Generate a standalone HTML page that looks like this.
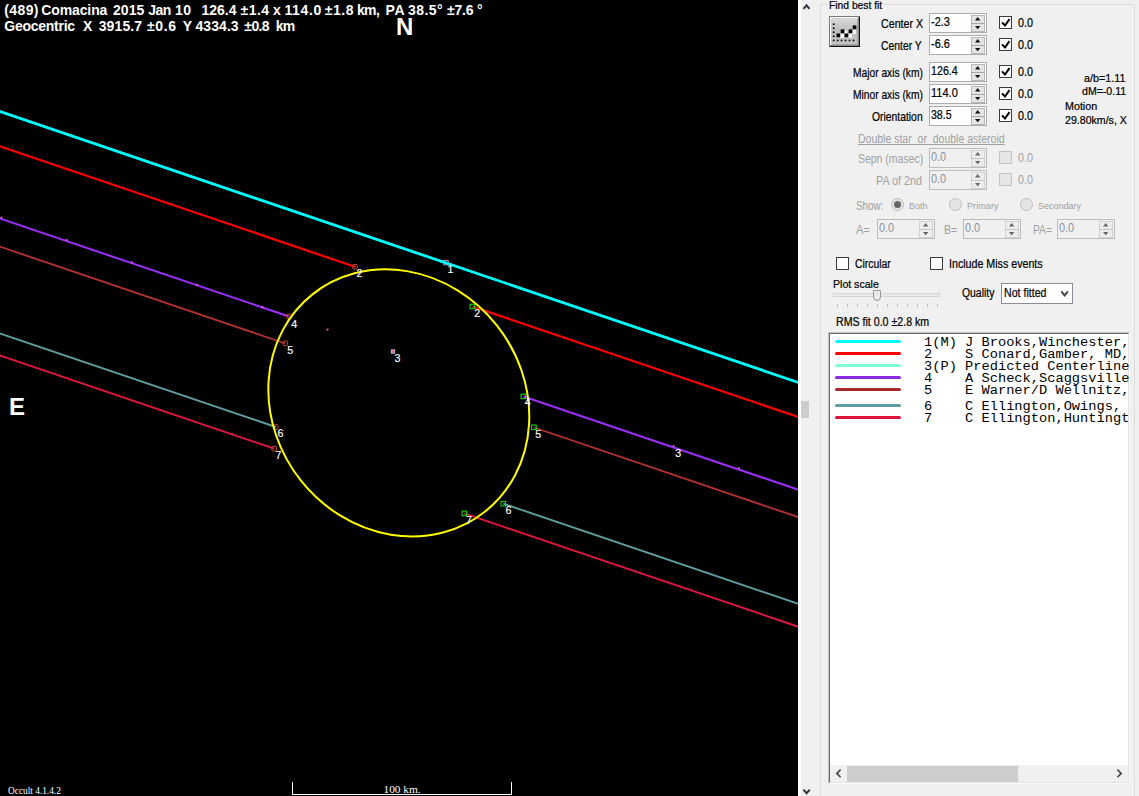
<!DOCTYPE html>
<html><head><meta charset="utf-8"><title>Occult - asteroid occultation plot</title>
<style>
html,body{margin:0;padding:0;}
body{width:1139px;height:796px;overflow:hidden;background:#f0f0f0;position:relative;font-family:"Liberation Sans",sans-serif;font-size:11px;color:#000;}
#plot{position:absolute;left:0;top:0;width:798px;height:796px;background:#000;overflow:hidden;}
#plot svg{position:absolute;left:0;top:0;}
.t{position:absolute;white-space:pre;line-height:1;}
.ttl{color:#fff;font-weight:bold;font-size:14px;}
.big{color:#fff;font-weight:bold;font-size:24px;}
.ser{color:#fff;font-family:"Liberation Serif",serif;}
.num{color:#fff;font-size:10.67px;-webkit-text-stroke:0.15px #fff;}
#panel{position:absolute;left:798px;top:0;width:341px;height:796px;background:#f0f0f0;overflow:hidden;}
#panel .a{position:absolute;}

#panel .tx{white-space:pre;line-height:1;transform-origin:0 50%;}
#panel .mono{font-family:"Liberation Mono",monospace;font-size:13.7px;line-height:1;white-space:pre;width:204.5px;overflow:hidden;height:14px;}

</style></head><body>
<div id="plot">
<svg width="798" height="796" viewBox="0 0 798 796">
<rect x="443.8" y="260.4" width="4.4" height="4.4" fill="none" stroke="#c898b8" stroke-width="1"/>
<g fill="none">
<line x1="-3" y1="110.58" x2="801" y2="383.38" stroke="#00ffff" stroke-width="2.8"/>
<line x1="-3" y1="145.33" x2="355" y2="266.8" stroke="#ff0000" stroke-width="2.2"/>
<line x1="472.5" y1="306.5" x2="801" y2="417.96" stroke="#ff0000" stroke-width="2.2"/>
<line x1="-3" y1="217.42" x2="289" y2="316.5" stroke="#9a30f8" stroke-width="2.0"/>
<line x1="523.5" y1="396.5" x2="801" y2="490.66" stroke="#9a30f8" stroke-width="2.0"/>
<line x1="-3" y1="245.65" x2="285.4" y2="343.5" stroke="#b83232" stroke-width="1.8"/>
<line x1="534" y1="427.5" x2="801" y2="518.09" stroke="#b83232" stroke-width="1.8"/>
<line x1="-3" y1="332.4" x2="275.8" y2="427" stroke="#5f9ea0" stroke-width="1.9"/>
<line x1="503.3" y1="503.7" x2="801" y2="604.71" stroke="#5f9ea0" stroke-width="1.9"/>
<line x1="-3" y1="354.55" x2="274.2" y2="448.6" stroke="#e01840" stroke-width="1.9"/>
<line x1="464.3" y1="513.4" x2="801" y2="627.64" stroke="#e01840" stroke-width="1.9"/>
</g>
<rect x="352.75" y="264.55" width="4.5" height="4.5" fill="none" stroke="#c84830" stroke-width="1" rx="0.8"/>
<rect x="286.75" y="314.15" width="4.5" height="4.5" fill="none" stroke="#c84830" stroke-width="1" rx="0.8"/>
<rect x="283.15" y="341.05" width="4.5" height="4.5" fill="none" stroke="#c84830" stroke-width="1" rx="0.8"/>
<rect x="273.55" y="424.75" width="4.5" height="4.5" fill="none" stroke="#c84830" stroke-width="1" rx="0.8"/>
<rect x="271.95" y="446.35" width="4.5" height="4.5" fill="none" stroke="#c84830" stroke-width="1" rx="0.8"/>
<rect x="470.09999999999997" y="304.2" width="4.6" height="4.6" fill="none" stroke="#10e810" stroke-width="1" rx="0"/>
<rect x="521.1" y="394.09999999999997" width="4.6" height="4.6" fill="none" stroke="#10e810" stroke-width="1" rx="0"/>
<rect x="531.6" y="425.0" width="4.6" height="4.6" fill="none" stroke="#10e810" stroke-width="1" rx="0"/>
<rect x="501.0" y="501.4" width="4.6" height="4.6" fill="none" stroke="#10e810" stroke-width="1" rx="0"/>
<rect x="462.0" y="511.09999999999997" width="4.6" height="4.6" fill="none" stroke="#10e810" stroke-width="1" rx="0"/>
<ellipse cx="398.8" cy="402.9" rx="138.7" ry="125" transform="rotate(51.5 398.8 402.9)" fill="none" stroke="#ffff00" stroke-width="2"/>
<rect x="390.9" y="349.3" width="4.2" height="4.4" fill="#a8c8c8"/>
<rect x="391.9" y="350.2" width="2.4" height="2.6" fill="#ff50a8"/>
<circle cx="1.5" cy="217.6" r="1.1" fill="#e060c8"/>
<circle cx="66.7" cy="240.0" r="1.1" fill="#e060c8"/>
<circle cx="131.9" cy="262.4" r="1.1" fill="#e060c8"/>
<circle cx="197.1" cy="284.8" r="1.1" fill="#e060c8"/>
<circle cx="262.3" cy="307.2" r="1.1" fill="#e060c8"/>
<circle cx="327.5" cy="329.6" r="1.1" fill="#e060c8"/>
<circle cx="673.6" cy="445.9" r="1.0" fill="#d060d0"/>
<circle cx="738.8" cy="468.0" r="1.0" fill="#d060d0"/>
<path d="M292.5 782 V794.5 H511.5 V782" fill="none" stroke="#fff" stroke-width="1" shape-rendering="crispEdges"/>
</svg>
<div class="t ttl" style="left:4.3px;top:3.15px;letter-spacing:0.38px;">(489)</div>
<div class="t ttl" style="left:41.2px;top:3.15px;letter-spacing:-0.10px;">Comacina</div>
<div class="t ttl" style="left:113.0px;top:3.15px;letter-spacing:0.05px;">2015</div>
<div class="t ttl" style="left:148.3px;top:3.15px;letter-spacing:-0.56px;">Jan</div>
<div class="t ttl" style="left:175.1px;top:3.15px;letter-spacing:0.33px;">10</div>
<div class="t ttl" style="left:201.4px;top:3.15px;letter-spacing:0.02px;">126.4</div>
<div class="t ttl" style="left:240.6px;top:3.15px;letter-spacing:0.42px;">±1.4</div>
<div class="t ttl" style="left:272.9px;top:3.15px;letter-spacing:0.00px;">x</div>
<div class="t ttl" style="left:284.5px;top:3.15px;letter-spacing:0.60px;">114.0</div>
<div class="t ttl" style="left:324.7px;top:3.15px;letter-spacing:0.55px;">±1.8</div>
<div class="t ttl" style="left:356.9px;top:3.15px;letter-spacing:-0.60px;">km,</div>
<div class="t ttl" style="left:385.5px;top:3.15px;letter-spacing:0.60px;">PA</div>
<div class="t ttl" style="left:408.1px;top:3.15px;letter-spacing:0.39px;">38.5°</div>
<div class="t ttl" style="left:446.9px;top:3.15px;letter-spacing:-0.15px;">±7.6</div>
<div class="t ttl" style="left:477.0px;top:3.15px;letter-spacing:0.00px;">°</div>
<div class="t ttl" style="left:4.3px;top:19.15px;letter-spacing:-0.26px;">Geocentric</div>
<div class="t ttl" style="left:82.9px;top:19.15px;letter-spacing:0.00px;">X</div>
<div class="t ttl" style="left:98.7px;top:19.15px;letter-spacing:0.12px;">3915.7</div>
<div class="t ttl" style="left:147.0px;top:19.15px;letter-spacing:0.60px;">±0.6</div>
<div class="t ttl" style="left:182.8px;top:19.15px;letter-spacing:0.00px;">Y</div>
<div class="t ttl" style="left:195.5px;top:19.15px;letter-spacing:0.06px;">4334.3</div>
<div class="t ttl" style="left:244.3px;top:19.15px;letter-spacing:-0.60px;">±0.8</div>
<div class="t ttl" style="left:275.7px;top:19.15px;letter-spacing:-0.60px;">km</div>
<div class="t big" style="left:396px;top:14.6px;">N</div>
<div class="t big" style="left:9px;top:395px;">E</div>
<div class="t ser" style="left:8px;top:786.5px;font-size:9.33px;">Occult 4.1.4.2</div>
<div class="t ser" style="left:383.5px;top:783.8px;font-size:11.33px;">100 km.</div>
<div class="t num" style="left:447.5px;top:264.167845px;">1</div>
<div class="t num" style="left:356.5px;top:268.167845px;">2</div>
<div class="t num" style="left:474.2px;top:308.167845px;">2</div>
<div class="t num" style="left:291.3px;top:319.167845px;">4</div>
<div class="t num" style="left:287.3px;top:345.167845px;">5</div>
<div class="t num" style="left:277.6px;top:428.167845px;">6</div>
<div class="t num" style="left:275.6px;top:450.167845px;">7</div>
<div class="t num" style="left:394.6px;top:353.167845px;">3</div>
<div class="t num" style="left:524.8px;top:397.167845px;">4</div>
<div class="t num" style="left:535.3px;top:429.167845px;">5</div>
<div class="t num" style="left:505.5px;top:505.16784500000006px;">6</div>
<div class="t num" style="left:466.1px;top:515.167845px;">7</div>
<div class="t num" style="left:675.2px;top:448.167845px;">3</div>
</div>
<div id="panel">
<div class="a" style="left:0px;top:0px;width:3px;height:796px;background:#fff;"></div>
<div class="a" style="left:3px;top:401px;width:8px;height:17px;background:#cdcdcd;"></div>
<svg class="a" style="left:0;top:0" width="30" height="796"><path d="M5.5 8.9 L8.5 5.3 L11.5 8.9" fill="none" stroke="#3a3040" stroke-width="2"/><path d="M5.4 789.6 L8.6 793.2 L11.8 789.6" fill="none" stroke="#3a3040" stroke-width="2"/></svg>
<div class="a" style="left:22px;top:4px;width:315px;height:800px;border:1px solid #dcdcdc;box-sizing:border-box;"></div>
<div class="a" style="left:29px;top:0px;width:57px;height:10px;background:#f0f0f0;"></div>
<svg class="a" style="left:31px;top:16px" width="32" height="32" viewBox="0 0 32 32">
<defs><linearGradient id="bg" x1="0" y1="0" x2="0" y2="1"><stop offset="0" stop-color="#d8d8d8"/><stop offset="0.5" stop-color="#bcbcbc"/><stop offset="1" stop-color="#c4c4c4"/></linearGradient></defs>
<rect x="0" y="0" width="31" height="31" fill="#787878"/>
<rect x="1" y="1" width="30" height="30" fill="#101010"/>
<rect x="1" y="1" width="28.5" height="28.5" fill="#fff"/>
<rect x="2.5" y="2.5" width="27" height="27" fill="#888"/>
<rect x="2.5" y="2.5" width="26" height="26" fill="url(#bg)"/>
<g fill="#000">
<circle cx="4.7" cy="8.3" r="0.95"/><circle cx="4.7" cy="12.3" r="0.95"/><circle cx="4.7" cy="16.3" r="0.95"/><circle cx="4.7" cy="20.3" r="0.95"/><circle cx="4.7" cy="24.4" r="0.95"/>
<circle cx="8.7" cy="24.4" r="0.95"/><circle cx="12.6" cy="24.4" r="0.95"/><circle cx="16.5" cy="24.4" r="0.95"/><circle cx="20.5" cy="24.4" r="0.95"/><circle cx="24.6" cy="24.4" r="0.95"/>
</g>
<g fill="#fff"><rect x="11.3" y="18.3" width="3.6" height="3.4"/><rect x="15.3" y="14.3" width="3" height="3"/><rect x="19.3" y="18.3" width="3.6" height="3.4"/><rect x="23.3" y="14.3" width="3.4" height="3.4"/></g>
<g fill="#000"><rect x="7.5" y="17.5" width="3.7" height="3.7"/><rect x="11.7" y="13.4" width="3.7" height="3.7"/><rect x="15.6" y="17.5" width="3.7" height="3.7"/><rect x="19.7" y="13.4" width="3.7" height="3.7"/><rect x="23.7" y="9.4" width="3.7" height="3.7"/></g>
</svg>
<div class="a" style="left:131px;top:13px;width:58px;height:20px;border:1px solid #abadb3;background:#fff;box-sizing:border-box;"></div>
<div class="a" style="left:173px;top:14.5px;width:13.5px;height:17px;background:#e4e4e4;border:1px solid #b8b8b8;box-sizing:border-box;"></div>
<div class="a" style="left:173px;top:22.5px;width:13.5px;height:1px;background:#a8a8a8;"></div>
<svg class="a" style="left:173px;top:13px" width="14" height="20"><path d="M4 7.4 L6.7 4.0 L9.4 7.4 Z" fill="#111"/><path d="M4 12.9 L6.7 16.3 L9.4 12.9 Z" fill="#111"/></svg>
<div class="a" style="left:201px;top:16px;width:13px;height:13px;border:1px solid #3c3c3c;background:#fff;box-sizing:border-box;"></div>
<svg class="a" style="left:201px;top:16px" width="13" height="13"><path d="M3.0 6.4 L6.0 9.5 L10.5 3.1" fill="none" stroke="#000" stroke-width="2"/></svg>
<div class="a" style="left:131px;top:35px;width:58px;height:20px;border:1px solid #abadb3;background:#fff;box-sizing:border-box;"></div>
<div class="a" style="left:173px;top:36.5px;width:13.5px;height:17px;background:#e4e4e4;border:1px solid #b8b8b8;box-sizing:border-box;"></div>
<div class="a" style="left:173px;top:44.5px;width:13.5px;height:1px;background:#a8a8a8;"></div>
<svg class="a" style="left:173px;top:35px" width="14" height="20"><path d="M4 7.4 L6.7 4.0 L9.4 7.4 Z" fill="#111"/><path d="M4 12.9 L6.7 16.3 L9.4 12.9 Z" fill="#111"/></svg>
<div class="a" style="left:201px;top:38px;width:13px;height:13px;border:1px solid #3c3c3c;background:#fff;box-sizing:border-box;"></div>
<svg class="a" style="left:201px;top:38px" width="13" height="13"><path d="M3.0 6.4 L6.0 9.5 L10.5 3.1" fill="none" stroke="#000" stroke-width="2"/></svg>
<div class="a" style="left:131px;top:62px;width:58px;height:20px;border:1px solid #abadb3;background:#fff;box-sizing:border-box;"></div>
<div class="a" style="left:173px;top:63.5px;width:13.5px;height:17px;background:#e4e4e4;border:1px solid #b8b8b8;box-sizing:border-box;"></div>
<div class="a" style="left:173px;top:71.5px;width:13.5px;height:1px;background:#a8a8a8;"></div>
<svg class="a" style="left:173px;top:62px" width="14" height="20"><path d="M4 7.4 L6.7 4.0 L9.4 7.4 Z" fill="#111"/><path d="M4 12.9 L6.7 16.3 L9.4 12.9 Z" fill="#111"/></svg>
<div class="a" style="left:201px;top:65px;width:13px;height:13px;border:1px solid #3c3c3c;background:#fff;box-sizing:border-box;"></div>
<svg class="a" style="left:201px;top:65px" width="13" height="13"><path d="M3.0 6.4 L6.0 9.5 L10.5 3.1" fill="none" stroke="#000" stroke-width="2"/></svg>
<div class="a" style="left:131px;top:84px;width:58px;height:20px;border:1px solid #abadb3;background:#fff;box-sizing:border-box;"></div>
<div class="a" style="left:173px;top:85.5px;width:13.5px;height:17px;background:#e4e4e4;border:1px solid #b8b8b8;box-sizing:border-box;"></div>
<div class="a" style="left:173px;top:93.5px;width:13.5px;height:1px;background:#a8a8a8;"></div>
<svg class="a" style="left:173px;top:84px" width="14" height="20"><path d="M4 7.4 L6.7 4.0 L9.4 7.4 Z" fill="#111"/><path d="M4 12.9 L6.7 16.3 L9.4 12.9 Z" fill="#111"/></svg>
<div class="a" style="left:201px;top:87px;width:13px;height:13px;border:1px solid #3c3c3c;background:#fff;box-sizing:border-box;"></div>
<svg class="a" style="left:201px;top:87px" width="13" height="13"><path d="M3.0 6.4 L6.0 9.5 L10.5 3.1" fill="none" stroke="#000" stroke-width="2"/></svg>
<div class="a" style="left:131px;top:106px;width:58px;height:20px;border:1px solid #abadb3;background:#fff;box-sizing:border-box;"></div>
<div class="a" style="left:173px;top:107.5px;width:13.5px;height:17px;background:#e4e4e4;border:1px solid #b8b8b8;box-sizing:border-box;"></div>
<div class="a" style="left:173px;top:115.5px;width:13.5px;height:1px;background:#a8a8a8;"></div>
<svg class="a" style="left:173px;top:106px" width="14" height="20"><path d="M4 7.4 L6.7 4.0 L9.4 7.4 Z" fill="#111"/><path d="M4 12.9 L6.7 16.3 L9.4 12.9 Z" fill="#111"/></svg>
<div class="a" style="left:201px;top:109px;width:13px;height:13px;border:1px solid #3c3c3c;background:#fff;box-sizing:border-box;"></div>
<svg class="a" style="left:201px;top:109px" width="13" height="13"><path d="M3.0 6.4 L6.0 9.5 L10.5 3.1" fill="none" stroke="#000" stroke-width="2"/></svg>
<div class="a" style="left:131px;top:148px;width:58px;height:20px;border:1px solid #bcbcbc;background:#f0f0f0;box-sizing:border-box;"></div>
<div class="a" style="left:173px;top:149.5px;width:13.5px;height:17px;background:#ededed;border:1px solid #d2d2d2;box-sizing:border-box;"></div>
<div class="a" style="left:173px;top:157.5px;width:13.5px;height:1px;background:#c4c4c4;"></div>
<svg class="a" style="left:173px;top:148px" width="14" height="20"><path d="M4 7.4 L6.7 4.0 L9.4 7.4 Z" fill="#666"/><path d="M4 12.9 L6.7 16.3 L9.4 12.9 Z" fill="#666"/></svg>
<div class="a" style="left:201px;top:151px;width:13px;height:13px;border:1px solid #c4c4c4;background:#e6e6e6;box-sizing:border-box;"></div>
<div class="a" style="left:131px;top:170px;width:58px;height:20px;border:1px solid #bcbcbc;background:#f0f0f0;box-sizing:border-box;"></div>
<div class="a" style="left:173px;top:171.5px;width:13.5px;height:17px;background:#ededed;border:1px solid #d2d2d2;box-sizing:border-box;"></div>
<div class="a" style="left:173px;top:179.5px;width:13.5px;height:1px;background:#c4c4c4;"></div>
<svg class="a" style="left:173px;top:170px" width="14" height="20"><path d="M4 7.4 L6.7 4.0 L9.4 7.4 Z" fill="#666"/><path d="M4 12.9 L6.7 16.3 L9.4 12.9 Z" fill="#666"/></svg>
<div class="a" style="left:201px;top:173px;width:13px;height:13px;border:1px solid #c4c4c4;background:#e6e6e6;box-sizing:border-box;"></div>
<div class="a" style="left:92.89999999999998px;top:197.9px;width:13px;height:13px;border:1px solid #bdbdbd;background:#e4e4e4;border-radius:50%;box-sizing:border-box;"></div>
<div class="a" style="left:95.89999999999998px;top:200.9px;width:7px;height:7px;background:#666;border-radius:50%;"></div>
<div class="a" style="left:151.20000000000005px;top:197.9px;width:13px;height:13px;border:1px solid #bdbdbd;background:#e4e4e4;border-radius:50%;box-sizing:border-box;"></div>
<div class="a" style="left:221.79999999999995px;top:197.9px;width:13px;height:13px;border:1px solid #bdbdbd;background:#e4e4e4;border-radius:50%;box-sizing:border-box;"></div>
<div class="a" style="left:79px;top:219px;width:58px;height:20px;border:1px solid #bcbcbc;background:#f0f0f0;box-sizing:border-box;"></div>
<div class="a" style="left:121px;top:220.5px;width:13.5px;height:17px;background:#ededed;border:1px solid #d2d2d2;box-sizing:border-box;"></div>
<div class="a" style="left:121px;top:228.5px;width:13.5px;height:1px;background:#c4c4c4;"></div>
<svg class="a" style="left:121px;top:219px" width="14" height="20"><path d="M4 7.4 L6.7 4.0 L9.4 7.4 Z" fill="#666"/><path d="M4 12.9 L6.7 16.3 L9.4 12.9 Z" fill="#666"/></svg>
<div class="a" style="left:165px;top:219px;width:58px;height:20px;border:1px solid #bcbcbc;background:#f0f0f0;box-sizing:border-box;"></div>
<div class="a" style="left:207px;top:220.5px;width:13.5px;height:17px;background:#ededed;border:1px solid #d2d2d2;box-sizing:border-box;"></div>
<div class="a" style="left:207px;top:228.5px;width:13.5px;height:1px;background:#c4c4c4;"></div>
<svg class="a" style="left:207px;top:219px" width="14" height="20"><path d="M4 7.4 L6.7 4.0 L9.4 7.4 Z" fill="#666"/><path d="M4 12.9 L6.7 16.3 L9.4 12.9 Z" fill="#666"/></svg>
<div class="a" style="left:259px;top:219px;width:58px;height:20px;border:1px solid #bcbcbc;background:#f0f0f0;box-sizing:border-box;"></div>
<div class="a" style="left:301px;top:220.5px;width:13.5px;height:17px;background:#ededed;border:1px solid #d2d2d2;box-sizing:border-box;"></div>
<div class="a" style="left:301px;top:228.5px;width:13.5px;height:1px;background:#c4c4c4;"></div>
<svg class="a" style="left:301px;top:219px" width="14" height="20"><path d="M4 7.4 L6.7 4.0 L9.4 7.4 Z" fill="#666"/><path d="M4 12.9 L6.7 16.3 L9.4 12.9 Z" fill="#666"/></svg>
<div class="a" style="left:38px;top:257px;width:13px;height:13px;border:1px solid #3c3c3c;background:#fff;box-sizing:border-box;"></div>
<div class="a" style="left:132px;top:257px;width:13px;height:13px;border:1px solid #3c3c3c;background:#fff;box-sizing:border-box;"></div>
<div class="a" style="left:35px;top:293px;width:107px;height:4px;background:#e7eaea;border:1px solid #d6d6d6;box-sizing:border-box;"></div>
<div class="a" style="left:75px;top:290px;width:8px;height:11px;background:#e9e9e9;border:1px solid #9a9a9a;box-sizing:border-box;border-radius:0 0 4px 4px;"></div>
<div class="a" style="left:39.0px;top:304px;width:1px;height:3px;background:#bcbcbc;"></div>
<div class="a" style="left:48.950000000000045px;top:304px;width:1px;height:3px;background:#bcbcbc;"></div>
<div class="a" style="left:58.89999999999998px;top:304px;width:1px;height:3px;background:#bcbcbc;"></div>
<div class="a" style="left:68.85000000000002px;top:304px;width:1px;height:3px;background:#bcbcbc;"></div>
<div class="a" style="left:78.79999999999995px;top:304px;width:1px;height:3px;background:#bcbcbc;"></div>
<div class="a" style="left:88.75px;top:304px;width:1px;height:3px;background:#bcbcbc;"></div>
<div class="a" style="left:98.70000000000005px;top:304px;width:1px;height:3px;background:#bcbcbc;"></div>
<div class="a" style="left:108.64999999999998px;top:304px;width:1px;height:3px;background:#bcbcbc;"></div>
<div class="a" style="left:118.60000000000002px;top:304px;width:1px;height:3px;background:#bcbcbc;"></div>
<div class="a" style="left:128.54999999999995px;top:304px;width:1px;height:3px;background:#bcbcbc;"></div>
<div class="a" style="left:138.5px;top:304px;width:1px;height:3px;background:#bcbcbc;"></div>
<div class="a" style="left:203px;top:283px;width:72px;height:21px;border:1px solid #8c8c94;background:#fff;box-sizing:border-box;"></div>
<svg class="a" style="left:260px;top:288px" width="12" height="12"><path d="M3.3 3.4 L6.6 7.4 L9.9 3.4" fill="none" stroke="#444" stroke-width="1.9"/></svg>
<div class="a" style="left:30px;top:332px;width:302px;height:452px;background:#fff;border-left:1px solid #c4c4c4;border-top:1px solid #c4c4c4;border-right:1px solid #fafafa;border-bottom:1px solid #fafafa;box-sizing:border-box;"></div>
<div class="a" style="left:31px;top:333px;width:300px;height:450px;background:#fff;border-left:1px solid #696969;border-top:1px solid #696969;border-right:1px solid #e3e3e3;border-bottom:1px solid #e3e3e3;box-sizing:border-box;"></div>
<div class="a" style="left:37px;top:339.5px;width:66px;height:3.4px;background:#00ffff;border-radius:1.7px;"></div>
<div class="a mono" style="left:126px;top:335.6px;">1(M) J Brooks,Winchester,</div>
<div class="a" style="left:37px;top:351.5px;width:66px;height:3.4px;background:#ff0000;border-radius:1.7px;"></div>
<div class="a mono" style="left:126px;top:347.6px;">2    S Conard,Gamber, MD,</div>
<div class="a" style="left:37px;top:363.5px;width:66px;height:3.4px;background:#7fffd4;border-radius:1.7px;"></div>
<div class="a mono" style="left:126px;top:359.6px;">3(P) Predicted Centerline</div>
<div class="a" style="left:37px;top:375.5px;width:66px;height:3.4px;background:#8a2be2;border-radius:1.7px;"></div>
<div class="a mono" style="left:126px;top:371.6px;">4    A Scheck,Scaggsville</div>
<div class="a" style="left:37px;top:387.5px;width:66px;height:3.4px;background:#a52a2a;border-radius:1.7px;"></div>
<div class="a mono" style="left:126px;top:383.6px;">5    E Warner/D Wellnitz,</div>
<div class="a" style="left:37px;top:403.5px;width:66px;height:3.4px;background:#5f9ea0;border-radius:1.7px;"></div>
<div class="a mono" style="left:126px;top:399.6px;">6    C Ellington,Owings, </div>
<div class="a" style="left:37px;top:415.5px;width:66px;height:3.4px;background:#dc143c;border-radius:1.7px;"></div>
<div class="a mono" style="left:126px;top:411.6px;">7    C Ellington,Huntingt</div>
<div class="a" style="left:32px;top:765px;width:298px;height:17px;background:#f0f0f0;"></div>
<div class="a" style="left:49px;top:765.5px;width:171px;height:16px;background:#cdcdcd;"></div>
<svg class="a" style="left:32px;top:765px" width="298" height="17"><path d="M10.6 4.6 L6.8 8.4 L10.6 12.2" fill="none" stroke="#444" stroke-width="1.6"/><path d="M287.4 4.6 L291.2 8.4 L287.4 12.2" fill="none" stroke="#444" stroke-width="1.6"/></svg>
<div class="a tx" style="left:31.04px;top:-0.45px;font-size:11.4px;color:#000;transform:scaleX(0.9040);-webkit-text-stroke:0.22px #000;">Find best fit</div>
<div class="a tx" style="left:83.22px;top:17.70px;font-size:12.4px;color:#000;transform:scaleX(0.8623);-webkit-text-stroke:0.22px #000;">Center X</div>
<div class="a tx" style="left:132.51px;top:15.70px;font-size:12.4px;color:#000;transform:scaleX(0.8846);-webkit-text-stroke:0.22px #000;">-2.3</div>
<div class="a tx" style="left:220.22px;top:16.70px;font-size:12.4px;color:#000;transform:scaleX(0.8691);-webkit-text-stroke:0.22px #000;">0.0</div>
<div class="a tx" style="left:83.23px;top:39.70px;font-size:12.4px;color:#000;transform:scaleX(0.8372);-webkit-text-stroke:0.22px #000;">Center Y</div>
<div class="a tx" style="left:132.51px;top:37.70px;font-size:12.4px;color:#000;transform:scaleX(0.8846);-webkit-text-stroke:0.22px #000;">-6.6</div>
<div class="a tx" style="left:220.22px;top:38.70px;font-size:12.4px;color:#000;transform:scaleX(0.8691);-webkit-text-stroke:0.22px #000;">0.0</div>
<div class="a tx" style="left:55.14px;top:66.70px;font-size:12.4px;color:#000;transform:scaleX(0.8258);-webkit-text-stroke:0.22px #000;">Major axis (km)</div>
<div class="a tx" style="left:133.42px;top:64.70px;font-size:12.4px;color:#000;transform:scaleX(0.8631);-webkit-text-stroke:0.22px #000;">126.4</div>
<div class="a tx" style="left:220.22px;top:65.70px;font-size:12.4px;color:#000;transform:scaleX(0.8691);-webkit-text-stroke:0.22px #000;">0.0</div>
<div class="a tx" style="left:55.14px;top:88.70px;font-size:12.4px;color:#000;transform:scaleX(0.8258);-webkit-text-stroke:0.22px #000;">Minor axis (km)</div>
<div class="a tx" style="left:133.40px;top:86.70px;font-size:12.4px;color:#000;transform:scaleX(0.8906);-webkit-text-stroke:0.22px #000;">114.0</div>
<div class="a tx" style="left:220.22px;top:87.70px;font-size:12.4px;color:#000;transform:scaleX(0.8691);-webkit-text-stroke:0.22px #000;">0.0</div>
<div class="a tx" style="left:73.53px;top:110.70px;font-size:12.4px;color:#000;transform:scaleX(0.8354);-webkit-text-stroke:0.22px #000;">Orientation</div>
<div class="a tx" style="left:133.42px;top:108.70px;font-size:12.4px;color:#000;transform:scaleX(0.8522);-webkit-text-stroke:0.22px #000;">38.5</div>
<div class="a tx" style="left:220.22px;top:109.70px;font-size:12.4px;color:#000;transform:scaleX(0.8691);-webkit-text-stroke:0.22px #000;">0.0</div>
<div class="a tx" style="left:285.82px;top:72.89px;font-size:11px;color:#000;transform:scaleX(0.9778);-webkit-text-stroke:0.22px #000;">a/b=1.11</div>
<div class="a tx" style="left:283.72px;top:85.89px;font-size:11px;color:#000;transform:scaleX(0.9606);-webkit-text-stroke:0.22px #000;">dM=-0.11</div>
<div class="a tx" style="left:266.82px;top:100.89px;font-size:11px;color:#000;transform:scaleX(0.9742);-webkit-text-stroke:0.22px #000;">Motion</div>
<div class="a tx" style="left:266.82px;top:114.89px;font-size:11px;color:#000;transform:scaleX(0.9635);-webkit-text-stroke:0.22px #000;">29.80km/s, X</div>
<div class="a tx" style="left:60.23px;top:133.04px;font-size:12.0px;color:#a0a0a0;transform:scaleX(0.8753);text-decoration:underline;text-underline-offset:1px;">Double star  or  double asteroid</div>
<div class="a tx" style="left:60.23px;top:153.04px;font-size:12.0px;color:#a0a0a0;transform:scaleX(0.8721);">Sepn (masec)</div>
<div class="a tx" style="left:133.31px;top:150.70px;font-size:12.4px;color:#8890a0;transform:scaleX(0.8815);">0.0</div>
<div class="a tx" style="left:220.22px;top:152.04px;font-size:12.0px;color:#a0a0a0;transform:scaleX(0.8973);">0.0</div>
<div class="a tx" style="left:78.22px;top:175.04px;font-size:12.0px;color:#a0a0a0;transform:scaleX(0.8968);">PA of 2nd</div>
<div class="a tx" style="left:133.31px;top:172.70px;font-size:12.4px;color:#8890a0;transform:scaleX(0.8815);">0.0</div>
<div class="a tx" style="left:220.22px;top:174.04px;font-size:12.0px;color:#a0a0a0;transform:scaleX(0.8973);">0.0</div>
<div class="a tx" style="left:58.45px;top:200.04px;font-size:12.0px;color:#a0a0a0;transform:scaleX(0.8243);">Show:</div>
<div class="a tx" style="left:111.29px;top:201.24px;font-size:9.4px;color:#a0a0a0;transform:scaleX(0.9599);">Both</div>
<div class="a tx" style="left:169.09px;top:201.24px;font-size:9.4px;color:#a0a0a0;transform:scaleX(0.9763);">Primary</div>
<div class="a tx" style="left:240.39px;top:201.24px;font-size:9.4px;color:#a0a0a0;transform:scaleX(0.9597);">Secondary</div>
<div class="a tx" style="left:58.40px;top:224.04px;font-size:12.0px;color:#a0a0a0;transform:scaleX(0.9188);">A=</div>
<div class="a tx" style="left:81.31px;top:221.70px;font-size:12.4px;color:#8890a0;transform:scaleX(0.8815);">0.0</div>
<div class="a tx" style="left:146.12px;top:224.04px;font-size:12.0px;color:#a0a0a0;transform:scaleX(0.8829);">B=</div>
<div class="a tx" style="left:167.31px;top:221.70px;font-size:12.4px;color:#8890a0;transform:scaleX(0.8815);">0.0</div>
<div class="a tx" style="left:235.44px;top:224.04px;font-size:12.0px;color:#a0a0a0;transform:scaleX(0.8601);">PA=</div>
<div class="a tx" style="left:261.31px;top:221.70px;font-size:12.4px;color:#8890a0;transform:scaleX(0.8815);">0.0</div>
<div class="a tx" style="left:56.53px;top:258.04px;font-size:12.0px;color:#000;transform:scaleX(0.8644);-webkit-text-stroke:0.22px #000;">Circular</div>
<div class="a tx" style="left:151.12px;top:258.04px;font-size:12.0px;color:#000;transform:scaleX(0.8888);-webkit-text-stroke:0.22px #000;">Include Miss events</div>
<div class="a tx" style="left:34.92px;top:278.72px;font-size:11.2px;color:#000;transform:scaleX(0.9433);-webkit-text-stroke:0.22px #000;">Plot scale</div>
<div class="a tx" style="left:164.23px;top:287.04px;font-size:12.0px;color:#000;transform:scaleX(0.8658);-webkit-text-stroke:0.22px #000;">Quality</div>
<div class="a tx" style="left:206.02px;top:287.04px;font-size:12.0px;color:#000;transform:scaleX(0.8840);-webkit-text-stroke:0.22px #000;">Not fitted</div>
<div class="a tx" style="left:38.02px;top:316.04px;font-size:12.0px;color:#000;transform:scaleX(0.8848);-webkit-text-stroke:0.22px #000;">RMS fit 0.0 ±2.8 km</div>
</div>
</body></html>
